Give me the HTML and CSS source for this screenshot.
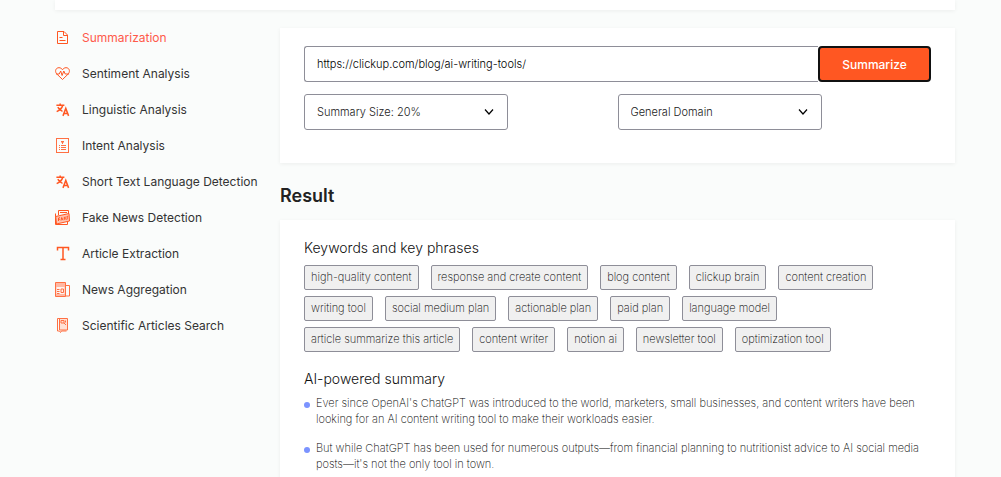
FILE: index.html
```
<!DOCTYPE html>
<html lang="en">
<head>
  <meta charset="UTF-8" />
  <meta name="viewport" content="width=device-width, initial-scale=1" />
  <title>Summarization</title>
  <link rel="stylesheet" href="styles.css">
</head>
<body>
  <!-- shared symbols -->
  <svg class="sprite" aria-hidden="true">
    <symbol id="translate" viewBox="0 0 16 16">
      <path d="M1.500 3.500h8.500M5.500 1.500v2M8.300 3.500C7.500 6.500 4.500 9 1.800 10.200M3 5.500c1 2 3 3.700 5 4.500" fill="none" stroke="currentColor" stroke-width="1.600" />
      <path d="M8.500 14.800l3-8 3 8M9.500 12.200h4" fill="none" stroke="currentColor" stroke-width="1.600" />
    </symbol>
    <symbol id="chevron" viewBox="0 0 10 8">
      <path d="M1 1.500l4 4.500 4-4.500" fill="none" stroke="currentColor" stroke-width="1.200" />
    </symbol>
  </svg>

  <div class="page">
    <header class="top-card"></header>

    <div class="layout">
      <nav class="menu">
        <a href="#" class="active">
          <svg viewBox="0 0 15 15"><path d="M2.500 1.500h6.500l3.500 3.500v8.500h-10zM8.500 1.500v4h4M4.500 7.500h3M4.500 10.500h6" /></svg>
          <span>Summarization</span>
        </a>
        <a href="#">
          <svg viewBox="0 0 15 15"><path d="M7.500 13.500L1.500 7.700C-.500 4.700 1 1.700 4 1.700c1.600 0 2.800 1 3.500 2 .700-1 1.900-2 3.500-2 3 0 4.500 3 2.500 6zM1 8h3.200L5.700 5l1.400 4.500L8.800 5l1.400 3H14" /></svg>
          <span>Sentiment Analysis</span>
        </a>
        <a href="#">
          <svg><use href="#translate" /></svg>
          <span>Linguistic Analysis</span>
        </a>
        <a href="#">
          <svg viewBox="0 0 15 15" class="soft"><rect x="1.500" y=".500" width="12" height="14" /><path d="M6 3.500h3M6.500 4.500h2M7.500 4v2M4 7.500h1M6 7.500h5M4 9.500h1M6 9.500h5M4 11.500h1M6 11.500h5" /></svg>
          <span>Intent Analysis</span>
        </a>
        <a href="#">
          <svg><use href="#translate" /></svg>
          <span>Short Text Language Detection</span>
        </a>
        <a href="#">
          <svg viewBox="0 0 15 15"><path d="M3.500 5V.500h10V9M.500 3.500v11h12V12M5 2.500h7" /><path d="M.700 6.500l13.300-3 .500 7.500-13 3z" fill="#ffc3b0" /><path d="M3.500 11V8l1.500-.300M3.500 9.500h1.200M6 10.500l.700-3 1.300 2.700M9.300 6.800v3M11 6.500L9.500 8.200l2 1.300M13.200 6.200l-1 .200v3" /></svg>
          <span>Fake News Detection</span>
        </a>
        <a href="#">
          <svg viewBox="0 0 15 15"><path d="M2.500 4.500V1.500h11v3M8 1.500v12M5.500 13.500h5" class="bold" /></svg>
          <span>Article Extraction</span>
        </a>
        <a href="#">
          <svg viewBox="0 0 15 15" class="soft"><path d="M.500.500h10v14H.500z" fill="#ffb8a3" /><path d="M1.500 5h8v7h-8z" fill="#fff3ef" stroke="none" /><path d="M10.500 3.500h4v10.500h-4M10.500 3.500v9M2 7.500h2.500M2 9.500h2.500M2 11.500h2.500M6 7h2.500v3.500H6z" /></svg>
          <span>News Aggregation</span>
        </a>
        <a href="#">
          <svg viewBox="0 0 15 15" class="soft"><path d="M2.500 .500h10v11.500H4.500V.500" fill="#ffe1d6" /><path d="M2.500 .500V13h2l1 1.500 1-1.500h5M6 2.500h3v2.500H6zM9 5l2 2M10.500 2.500v2" /></svg>
          <span>Scientific Articles Search</span>
        </a>
      </nav>

      <main class="content">
        <form class="card">
          <div class="url-row">
            <input type="text" aria-label="Article URL" value="https://clickup.com/blog/ai-writing-tools/" />
            <button type="button">Summarize</button>
          </div>
          <div class="options">
            <div class="select">
              <select aria-label="Summary size">
                <option>Summary Size: 20%</option>
              </select>
              <svg><use href="#chevron" /></svg>
            </div>
            <div class="select">
              <select aria-label="Domain">
                <option>General Domain</option>
              </select>
              <svg><use href="#chevron" /></svg>
            </div>
          </div>
        </form>

        <h2>Result</h2>

        <section class="card result">
          <h3>Keywords and key phrases</h3>
          <ul class="tags">
            <li>high-quality content</li>
            <li>response and create content</li>
            <li>blog content</li>
            <li>clickup brain</li>
            <li>content creation</li>
            <li>writing tool</li>
            <li>social medium plan</li>
            <li>actionable plan</li>
            <li>paid plan</li>
            <li>language model</li>
            <li>article summarize this article</li>
            <li>content writer</li>
            <li>notion ai</li>
            <li>newsletter tool</li>
            <li>optimization tool</li>
          </ul>

          <h3>AI-powered summary</h3>
          <ul class="summary">
            <li>Ever since OpenAI's ChatGPT was introduced to the world, marketers, small businesses, and content writers have been looking for an AI content writing tool to make their workloads easier.</li>
            <li>But while ChatGPT has been used for numerous outputs—from financial planning to nutritionist advice to AI social media posts—it's not the only tool in town.</li>
          </ul>
        </section>
      </main>
    </div>
  </div>
</body>
</html>
```
FILE: styles.css
```
* {
  box-sizing: border-box;
}
html {
  scrollbar-width: none;
}
body {
  font-family: 'Inter', sans-serif;
  font-weight: 200;
  margin: 0;
  background-color: #fafcfb;
  color: #000;
}
.sprite {
  display: none;
}
.page {
  padding: 0 46px 0 55px;
}
.top-card {
  height: 10px;
  background-color: #fff;
  box-shadow: 0 1px 4px rgba(0, 0, 0, 0.06);
}
.layout {
  display: grid;
  grid-template-columns: 1fr 3fr;
}
.menu {
  padding-top: 9px;
}
.menu a {
  display: flex;
  align-items: center;
  gap: 12px;
  height: 36px;
  font-size: 12px;
  font-weight: 400;
  color: #333;
  text-decoration: none;
  white-space: nowrap;
}
.menu a.active {
  color: #ff5a4a;
}
.menu svg {
  width: 15px;
  height: 15px;
  color: #ff5722;
  fill: none;
  stroke: #ff5722;
  stroke-width: 1;
}
.menu .bold {
  stroke-width: 1.5;
}
.menu .soft {
  stroke: #ff7043;
}
.content {
  min-width: 0;
  padding-top: 18px;
}
.card {
  padding: 18px 24px 33px;
  background-color: #fff;
  box-shadow: 0 1px 4px rgba(0, 0, 0, 0.06);
}
.url-row {
  display: flex;
}
.url-row input,
.select select {
  height: 36px;
  padding: 0 12px;
  border: 1px solid #8e8e98;
  border-radius: 3px;
  background-color: #fff;
  color: #000;
  font-family: inherit;
  font-size: 11px;
  font-weight: 300;
}
.url-row input {
  flex: 1;
  min-width: 0;
  border-right: none;
  border-radius: 3px 0 0 3px;
}
.url-row button {
  width: 113px;
  height: 36px;
  padding: 0;
  border: 2px solid #111;
  border-radius: 4px;
  background-color: #ff5722;
  color: #fff;
  font-family: inherit;
  font-size: 12px;
  font-weight: 500;
  cursor: pointer;
}
.options {
  display: grid;
  grid-template-columns: 1fr 1fr;
  margin-top: 12px;
}
.select {
  display: grid;
  grid-template-columns: 1fr 24px;
  align-items: center;
  width: 204px;
}
.select select {
  grid-area: 1 / 1 / 2 / 3;
  appearance: none;
  color: #222;
}
.select svg {
  grid-area: 1 / 2;
  width: 10px;
  height: 8px;
  pointer-events: none;
}
h2 {
  margin: 22px 0 13px;
  color: #222;
  font-size: 18px;
  line-height: 22px;
  font-weight: 600;
}
h3 {
  margin: 0 0 8px;
  color: #111;
  font-size: 14px;
  line-height: 18px;
  font-weight: 300;
}
.result {
  padding-top: 19px;
}
.tags,
.summary {
  margin: 0;
  padding: 0;
  list-style: none;
}
.tags {
  display: flex;
  flex-wrap: wrap;
  gap: 6px 12px;
  margin-bottom: 18px;
}
.tags li {
  height: 25px;
  padding: 0 6px;
  border: 1px solid #8e8e98;
  border-radius: 2px;
  background-color: #f0f0f0;
  color: #000;
  font-size: 11px;
  line-height: 22px;
}
.summary {
  margin-top: -1px;
}
.summary li {
  position: relative;
  margin-bottom: 13px;
  padding-left: 12px;
  color: #000;
  font-size: 11px;
  line-height: 16px;
}
.summary li::before {
  content: '';
  position: absolute;
  top: 7px;
  left: 0;
  width: 6px;
  height: 6px;
  border-radius: 50%;
  background-color: #7b93ff;
}
```
